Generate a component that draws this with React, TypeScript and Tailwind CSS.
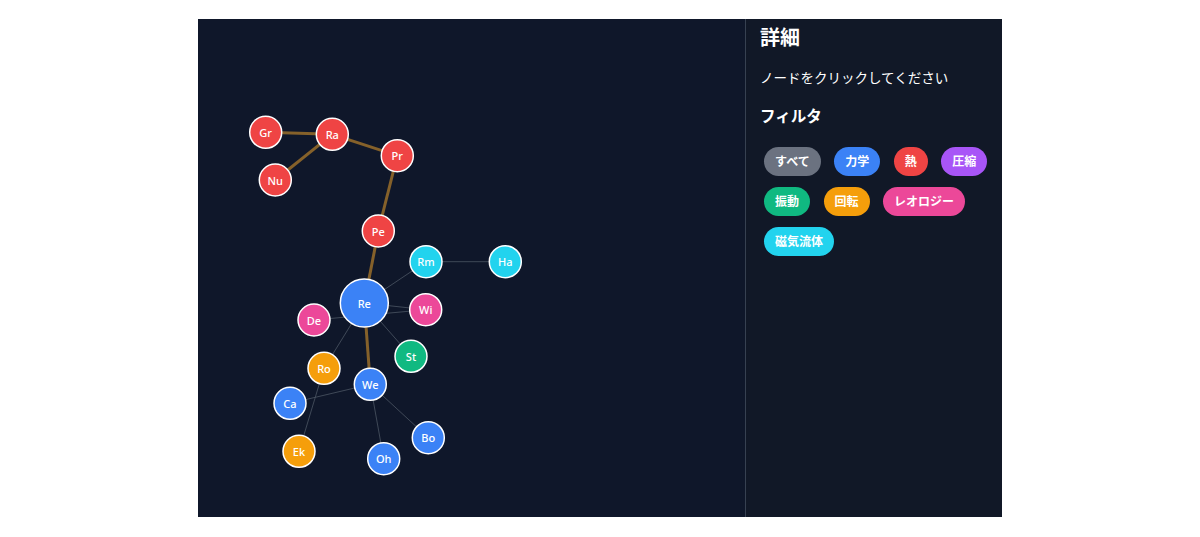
type Node = { id: string; x: number; y: number; color: string; r?: number };

const nodes: Node[] = [
  { id: "Gr", x: 67.7, y: 113.3, color: "#ef4444" },
  { id: "Ra", x: 134.3, y: 115.3, color: "#ef4444" },
  { id: "Pr", x: 199.3, y: 136.7, color: "#ef4444" },
  { id: "Nu", x: 77.3, y: 161, color: "#ef4444" },
  { id: "Pe", x: 180.3, y: 212, color: "#ef4444" },
  { id: "Rm", x: 228, y: 242.7, color: "#22d3ee" },
  { id: "Ha", x: 307.3, y: 242.7, color: "#22d3ee" },
  { id: "Re", x: 166.3, y: 284, color: "#3b82f6", r: 24 },
  { id: "De", x: 116, y: 301, color: "#ec4899" },
  { id: "Wi", x: 227.7, y: 290.7, color: "#ec4899" },
  { id: "St", x: 213, y: 337.3, color: "#10b981" },
  { id: "Ro", x: 126, y: 349.3, color: "#f59e0b" },
  { id: "We", x: 172.3, y: 365.3, color: "#3b82f6" },
  { id: "Ca", x: 92, y: 384.3, color: "#3b82f6" },
  { id: "Ek", x: 101, y: 432.3, color: "#f59e0b" },
  { id: "Bo", x: 230.3, y: 418.7, color: "#3b82f6" },
  { id: "Oh", x: 185.7, y: 439.7, color: "#3b82f6" },
];

// [from, to, strong]
const edges: [string, string, boolean][] = [
  ["Rm", "Ha", false],
  ["Re", "Rm", false],
  ["De", "Wi", false],
  ["Re", "Wi", false],
  ["Re", "St", false],
  ["Re", "Ro", false],
  ["Ro", "Ek", false],
  ["Ca", "We", false],
  ["We", "Oh", false],
  ["We", "Bo", false],
  ["Gr", "Ra", true],
  ["Ra", "Nu", true],
  ["Ra", "Pr", true],
  ["Pr", "Pe", true],
  ["Pe", "Re", true],
  ["Re", "We", true],
];

const filters = [
  { label: "すべて", cls: "bg-[#6b7280]" },
  { label: "力学", cls: "bg-[#3b82f6]" },
  { label: "熱", cls: "bg-[#ef4444]" },
  { label: "圧縮", cls: "bg-[#a855f7]" },
  { label: "振動", cls: "bg-[#10b981]" },
  { label: "回転", cls: "bg-[#f59e0b]" },
  { label: "レオロジー", cls: "bg-[#ec4899]" },
  { label: "磁気流体", cls: "bg-[#22d3ee]" },
];

const byId = Object.fromEntries(nodes.map((n) => [n.id, n]));

function Graph() {
  return (
    <svg width="547" height="498" className="block">
      {edges.map(([a, b, strong]) => (
        <line
          key={a + b}
          x1={byId[a].x}
          y1={byId[a].y}
          x2={byId[b].x}
          y2={byId[b].y}
          stroke={strong ? "#85612a" : "#4b5563"}
          strokeWidth={strong ? 3 : 1}
          strokeOpacity={strong ? 1 : 0.8}
        />
      ))}
      {nodes.map((n) => (
        <g key={n.id}>
          <circle cx={n.x} cy={n.y} r={n.r ?? 16} fill={n.color} stroke="#ffffff" strokeWidth={1.5} />
          <text
            x={n.x}
            y={n.y}
            textAnchor="middle"
            dominantBaseline="central"
            fill="#ffffff"
            fontSize="11"
            fontWeight="500"
          >
            {n.id}
          </text>
        </g>
      ))}
    </svg>
  );
}

export default function App() {
  return (
    <div className="flex min-h-screen justify-center bg-white pt-[19px] font-['Noto_Sans','Noto_Sans_CJK_JP',sans-serif]">
      <div className="flex h-[498px] w-[804px] self-start">
        {/* graph canvas */}
        <div className="w-[547px] bg-[#0f172a]">
          <Graph />
        </div>

        {/* side panel */}
        <aside className="w-[257px] border-l border-[#374151] bg-[#111827] pl-[14px] pt-[5px] text-white">
          <h2 className="text-xl leading-7 font-bold">詳細</h2>
          <p className="mt-4 text-[13.5px] leading-5">ノードをクリックしてください</p>
          <h3 className="mt-4 text-[15.5px] leading-6 font-bold">フィルタ</h3>
          <div className="mt-[19px] flex flex-wrap gap-x-[13.5px] gap-y-[10.6px] pl-[4px] pr-2">
            {filters.map((f) => (
              <button
                key={f.label}
                className={`flex h-[29.4px] items-center rounded-full px-[11px] text-xs font-bold text-white ${f.cls}`}
              >
                {f.label}
              </button>
            ))}
          </div>
        </aside>
      </div>
    </div>
  );
}
